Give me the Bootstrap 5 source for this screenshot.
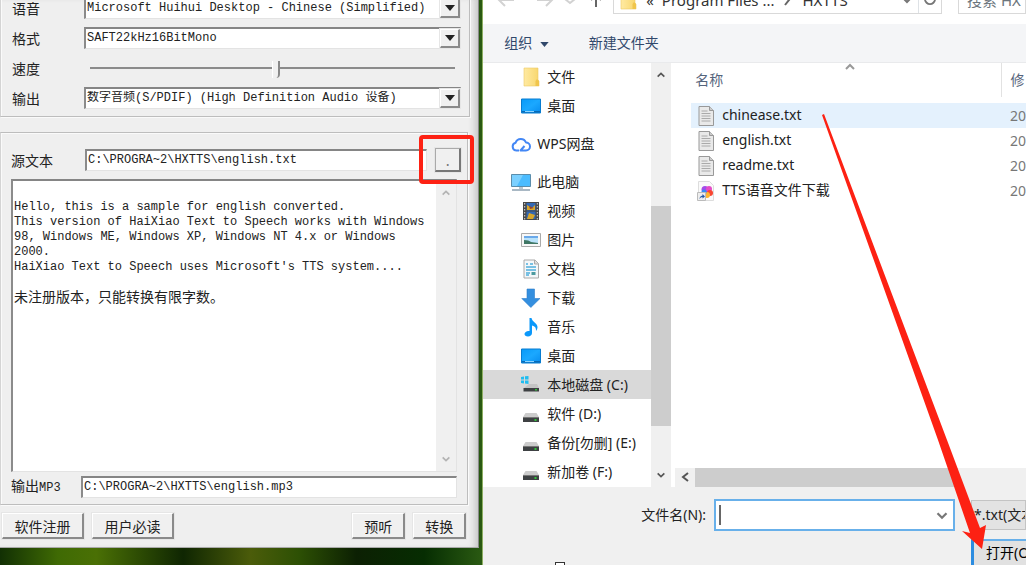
<!DOCTYPE html>
<html lang="zh-CN">
<head>
<meta charset="utf-8">
<meta name="viewport" content="width=device-width, initial-scale=1">
<title>HXTTS</title>
<link href="https://cdn.jsdelivr.net/npm/bootstrap@5.3.0/dist/css/bootstrap.min.css" rel="stylesheet">
<style>
  body { font: 14px/20px "Noto Sans", "Noto Sans CJK SC", sans-serif; color: #222; background: #173704; overflow: hidden; }
  .desktop { display: grid; grid-template-columns: 47fr 53fr; height: 100vh; min-height: 480px; }
  .wallpaper { padding: 0 3px 17px 0; background: linear-gradient(90deg, #123004, #3f6a04 12%, #4a7005 20%, #0f2602 38%, #4b5c0a 52%, #2d5004 62%, #0c2003 74%, #062d02 88%, #2a5a12); }

  /* converter window */
  .tts { background: #efefef; border-right: 1px solid #8a8a8a; border-bottom: 1px solid #aaa; font-family: "Liberation Mono", "Noto Sans CJK SC", monospace; box-shadow: inset -7px 0 7px -4px #c4c4c4; }
  .group { border: 1px solid #bdbdbd; border-left-color: #d4d4d4; box-shadow: inset 1px 1px #fafafa, 1px 1px #fafafa; margin-right: 8px; padding: 0 8px 3px 11px; }
  .group-voice { margin-top: -7px; border-top: 0; }
  .group-text { margin-top: 15px; margin-right: 10px; padding: 16px 10px 6px 10px; }
  .line { display: flex; align-items: center; height: 30px; }
  .line-short { height: 22px; }
  .cap { flex: 0 0 72px; font: 14px/20px "Noto Sans CJK SC", sans-serif; }
  .group-text .cap { flex-basis: 74px; }
  .group-text .cap-mp3 { flex-basis: 70px; font: 12px/20px "Liberation Mono", "Noto Sans CJK SC", monospace; }
  .cap-mp3 span { font-size: 14px; }
  .sunken { background: #fff; border: 1px solid #e3e3e3; border-top: 2px solid #858585; border-left: 2px solid #8b8b8b; }
  .sunken select, .sunken input, .sunken textarea { border: 0; outline: 0; padding: 0 1px; background: transparent; appearance: none; color: #222; font: 12px/15px "Liberation Mono", "Noto Sans CJK SC", monospace; min-width: 0; }
  .combo { height: 22px; }
  .raised { background: #f0f0f0; border: 1px solid #fff; border-right: 2px solid #8a8a8a; border-bottom: 2px solid #8a8a8a; box-shadow: 0 0 0 1px #e6e6e6; }
  .drop { width: 20px; }
  .speed { appearance: none; background: transparent; margin: 0 6px; height: 20px; }
  .speed::-webkit-slider-runnable-track { height: 2px; background: #8b8b8b; }
  .speed::-webkit-slider-thumb { appearance: none; width: 8px; height: 17px; margin-top: -6px; background: #f0f0f0; border-right: 2px solid #888; border-left: 1px solid #fff; border-radius: 0 0 4px 0; }
  .editor textarea { resize: none; height: 108px; white-space: pre; overflow: hidden; display: block; }
  .editor .sunken-text, .editor textarea { padding-top: 4px; }
  .editor .notice { font-size: 14px; line-height: 15px; padding: 0 1px; font-family: "Noto Sans CJK SC", sans-serif; }
  .rail { background: #f0f0f0; width: 20px; flex: none; }
  .browse { width: 26px; height: 24px; margin-right: -4px; }
  .browse .raised { width: 100%; height: 100%; padding: 0; border-color: #aaa #777 #777 #aaa; color: #777; }
  .marker { position: absolute; inset: -13px -13px -12px -16px; border: 4px solid #fd2113; border-radius: 4px; pointer-events: none; }
  .push { height: 26px; font: 14px/20px "Noto Sans CJK SC", sans-serif; color: #222; padding: 0; }
  .push-wide { width: 82px; }
  .push-slim { width: 53px; }
  .actions { padding: 8px 12px 8px 2px; gap: 8px; }

  /* open dialog */
  .dialog-open { background: #f0f0f0; min-width: 0; border-left: 1px solid #8dae62; }
  .topbar { height: 38px; margin-top: -14px; padding-bottom: 10px; font-size: 15px; color: #333; padding-left: 14px; }
  .field { border: 1px solid #d9d9d9; height: 28px; }
  .find { width: 68px; }
  .tools { background: #f4f5f7; height: 39px; border-bottom: 1px solid #e9eaec; padding-left: 21px; }
  .tools button { color: #30486b; border: 0; background: none; padding: 0; }
  .tree { width: 168px; }
  .tree a { display: flex; align-items: center; height: 29px; gap: 6px; padding-left: 38px; color: #222; text-decoration: none; white-space: nowrap; }
  .tree a:first-child { margin-top: -1px; }
  .tree a.top-level { padding-left: 28px; margin-top: 9px; }
  .tree a.current { background: #d9d9d9; }
  .tree svg { flex: none; width: 20px; height: 20px; }
  .thumb { background: #cdcdcd; }
  .sorted { left: 48%; }
  .files { table-layout: fixed; width: 100%; }
  .files th { height: 34px; font-weight: 400; color: #56657c; padding: 0 4px; }
  .files td { height: 25px; padding: 0 0 0 6px; }
  .files .when { width: 24px; padding: 0 0 0 8px; white-space: nowrap; overflow: hidden; color: #777; }
  .files th.when { border-left: 1px solid #e2e2e2; color: #56657c; }
  .files .picked td { background: #e4f1fd; }
  .files svg { width: 18px; height: 20px; margin-right: 7px; }
  .spacer-row td { height: 6px; }
  .name-box { border: 2px solid #68b0ea; background: #fff; height: 32px; width: 241px; }
  .name-box input { border: 0; outline: 0; min-width: 0; background: transparent; padding: 0; }
  .caret { width: 2px; height: 20px; background: #666; margin-left: 3px; }
  .kind { background: #e3e3e3; border: 1px solid #c4c4c4; height: 30px; appearance: none; padding: 0 0 0 2px; min-width: 0; width: 55px; color: #222; }
  .go { background: #e1e1e1; border: 2px solid #68b0ea; border-left: 3px solid #2c8ce0; border-right: 0; height: 36px; width: 55px; padding: 0 0 8px 12px; text-align: left; white-space: nowrap; overflow: hidden; }
  .pointer { position: absolute; left: 339px; top: 113px; pointer-events: none; }
  .tick { position: absolute; left: 72px; bottom: -4px; width: 10px; height: 7px; border: 1px solid #333; background: #fff; }
</style>
</head>
<body>
<svg width="0" height="0" class="position-absolute" aria-hidden="true">
  <defs>
    <linearGradient id="sky" x2="1" y2="1"><stop stop-color="#079af8"/><stop offset=".5" stop-color="#1ba8ff"/><stop offset="1" stop-color="#078df0"/></linearGradient>
    <linearGradient id="gold" x2="1"><stop stop-color="#ffeaa2"/><stop offset="1" stop-color="#f8d66c"/></linearGradient>
    <symbol id="folder" viewBox="0 0 20 20"><path d="M3 1h14v12l1 1v5H3z" fill="url(#gold)" stroke="#eccb66" stroke-width=".6"/><path d="M14.500 19v-5l1.500-2 2 2v5z" fill="#f0c54c"/></symbol>
    <symbol id="desk" viewBox="0 0 20 20"><path d="M.5 3h19v14H.5z" fill="url(#sky)" stroke="#087cd0"/><path d="M1 15h18v1.500H1z" fill="#0869b4"/><path d="M4 15.500h9" stroke="#8bd4ff"/></symbol>
    <symbol id="cloud" viewBox="0 0 20 20"><path d="M5 16.500a4 4 0 0 1-.4-7.800A5.500 5.500 0 0 1 15 8.500a4 4 0 0 1 0 8H9.500l4-4.500M5 16.500h3" fill="none" stroke="#4387f5" stroke-width="2" stroke-linejoin="round"/></symbol>
    <symbol id="pc" viewBox="0 0 20 20"><path d="M.5 2.500h19v12H.5z" fill="#4bbcff" stroke="#5b8dab"/><path d="M1 3h11L6 14H1z" fill="#7bd0ff"/><path d="M8 15h4v2H8z" fill="#b9c7d0"/><path d="M1 18h18" stroke="#8ca1b0" stroke-width="1.500"/></symbol>
    <symbol id="film" viewBox="0 0 20 20"><path d="M2 1h16v18H2z" fill="#474747"/><path d="M5.500 2h9v7.500h-9zM5.500 10.500h9V18h-9z" fill="#3368b4"/><path d="M6 4l5 3 3-3v5H6zM8 12l6 2-2 4H6z" fill="#d9a72a"/><path d="M8 5l5 2-4 1z" fill="#963f2c"/><path d="M3.700 2v17M16.300 2v17" stroke="#ddd" stroke-dasharray="1.500 1.500"/></symbol>
    <symbol id="pic" viewBox="0 0 20 20"><path d="M.5 3.500h19v13H.5z" fill="#f8f8f8" stroke="#aaa"/><path d="M3 6h14v8H3z" fill="#b9e2fa"/><path d="M3 6h14v2H3z" fill="#6aa9ea"/><path d="M3 10q5 0 7 2l7 1v1H3z" fill="#407765"/></symbol>
    <symbol id="doc" viewBox="0 0 20 20"><path d="M3 1h11l3.500 3.500V19H3z" fill="#f4f7f9" stroke="#aaa"/><path d="M13.500 1v4h4" fill="#ddd" stroke="#aaa"/><path d="M5 5h2M9 5h3M5 8h10M5 11h10M5 14h4M5 16h3" stroke="#4faedc" stroke-width="1.500"/><path d="M10.500 13h4v3h-4z" fill="#4d9a9f"/></symbol>
    <symbol id="down" viewBox="0 0 20 20"><path d="M6 1h7.500v9.500H19L9.800 19.500.8 10.500H6z" fill="#348fdf" stroke="#2b7ecb" stroke-width=".6"/></symbol>
    <symbol id="note" viewBox="0 0 20 20"><path d="M8.500 1h2c.5 4 6 5 6 9 0 2-.8 3-1.500 4 .3-3-1-5-4-5.500V16c0 2-1.800 3.500-4 3.500S3.500 18.300 3.500 17c0-2 2.500-3.500 5-3z" fill="#0b98fa"/></symbol>
    <symbol id="drive" viewBox="0 0 20 20"><path d="M4.500 9h11l2.500 4H2z" fill="#ccc"/><path d="M2 13h16v5H2z" fill="#3e4143"/><path d="M2 13h16v1H2z" fill="#777"/><path d="M13.500 15h2v2h-2z" fill="#31c43b"/></symbol>
    <symbol id="windrive" viewBox="0 0 20 20"><path d="M0 2l3-.5v3H0zM4 1.300L7.500 1v3.500H4zM0 5.500h3v3L0 8zM4 5.500h3.500V9L4 8.500z" fill="#21bdf0"/><path d="M8 9h8l2 4H3z" fill="#c4c4c4"/><path d="M2.500 13H18v3.500H2.500z" fill="#3e4143"/><path d="M14 14h2v1.500h-2z" fill="#31c43b"/></symbol>
    <symbol id="txt" viewBox="0 0 18 20"><path d="M2 .5h10.500L16.500 4.500v15H2z" fill="#e9e9e9" stroke="#999"/><path d="M12.500.5v4h4" fill="#ccc" stroke="#999"/><path d="M4.500 5h6M4.500 7.500h9M4.500 10h9M4.500 12.500h9M4.500 15h9" stroke="#aaa"/></symbol>
    <symbol id="web" viewBox="0 0 18 20"><path d="M1.500.5h11l4 4v15h-15z" fill="#fafafa" stroke="#ddd"/><circle cx="8" cy="8.500" r="3.500" fill="#a44bea"/><circle cx="12" cy="8" r="3" fill="#e44cc6"/><circle cx="13" cy="12" r="3" fill="#f84632"/><circle cx="10" cy="14" r="3" fill="#ffb52d"/><circle cx="7" cy="11" r="2.500" fill="#348bf5"/><path d="M.5 11.500h8v8h-8z" fill="#eee" stroke="#bbb"/><path d="M2.500 18q0-3 3-3.500v-1.500l2.500 2.500-2.500 2v-1.500q-2 0-3 2z" fill="#265aa5"/></symbol>
    <symbol id="chev-up" viewBox="0 0 12 8"><path d="M2 6l4-4 4 4" fill="none" stroke="currentColor" stroke-width="2"/></symbol>
    <symbol id="chev-down" viewBox="0 0 12 8"><path d="M2 2l4 4 4-4" fill="none" stroke="currentColor" stroke-width="2"/></symbol>
    <symbol id="tri" viewBox="0 0 10 6"><path d="M0 0h10L5 6z" fill="currentColor"/></symbol>
  </defs>
</svg>

<main class="desktop">
  <div class="wallpaper d-flex">
    <section class="tts d-flex flex-column flex-fill">
      <div class="group group-voice">
        <div class="line"><label class="cap" for="voice">语音</label>
          <div class="sunken combo d-flex flex-fill"><select id="voice" class="flex-fill"><option>Microsoft Huihui Desktop - Chinese (Simplified)</option></select><span class="raised drop d-flex align-items-center justify-content-center"><svg width="10" height="6"><use href="#tri"/></svg></span></div></div>
        <div class="line"><label class="cap" for="format">格式</label>
          <div class="sunken combo d-flex flex-fill"><select id="format" class="flex-fill"><option>SAFT22kHz16BitMono</option></select><span class="raised drop d-flex align-items-center justify-content-center"><svg width="10" height="6"><use href="#tri"/></svg></span></div></div>
        <div class="line"><label class="cap" for="speed">速度</label><input id="speed" class="speed flex-fill" type="range" min="0" max="100" value="51"></div>
        <div class="line"><label class="cap" for="device">输出</label>
          <div class="sunken combo d-flex flex-fill"><select id="device" class="flex-fill"><option>数字音频(S/PDIF) (High Definition Audio 设备)</option></select><span class="raised drop d-flex align-items-center justify-content-center"><svg width="10" height="6"><use href="#tri"/></svg></span></div></div>
      </div>

      <div class="group group-text d-flex flex-column flex-fill">
        <div class="line line-short"><label class="cap" for="source">源文本</label>
          <div class="sunken combo d-flex flex-fill"><input id="source" class="flex-fill" type="text" value="C:\PROGRA~2\HXTTS\english.txt"></div>
          <div class="browse position-relative ms-2"><button class="raised push" type="button" aria-label="浏览">.</button><span class="marker"></span></div>
        </div>
        <div class="sunken editor d-flex flex-fill mt-2">
          <div class="flex-fill">
            <textarea class="w-100" aria-label="文本内容">

Hello, this is a sample for english converted.
This version of HaiXiao Text to Speech works with Windows
98, Windows ME, Windows XP, Windows NT 4.x or Windows
2000.
HaiXiao Text to Speech uses Microsoft's TTS system....</textarea>
            <div class="notice">未注册版本，只能转换有限字数。</div>
          </div>
          <div class="rail d-flex flex-column justify-content-between align-items-center py-2 text-black-50"><svg width="10" height="8" opacity=".5"><use href="#chev-up"/></svg><svg width="10" height="8" opacity=".5"><use href="#chev-down"/></svg></div>
        </div>
        <div class="line line-short mt-1"><label class="cap cap-mp3" for="mp3"><span>输出</span>MP3</label>
          <div class="sunken combo d-flex flex-fill"><input id="mp3" class="flex-fill" type="text" value="C:\PROGRA~2\HXTTS\english.mp3"></div></div>
      </div>

      <div class="actions d-flex">
        <button class="raised push push-wide" type="button">软件注册</button>
        <button class="raised push push-wide me-auto" type="button">用户必读</button>
        <button class="raised push push-slim" type="button">预听</button>
        <button class="raised push push-slim" type="button">转换</button>
      </div>
    </section>
  </div>

  <section class="dialog-open d-flex flex-column position-relative">
    <header class="topbar bg-white d-flex align-items-center">
      <svg width="116" height="28" fill="none" stroke="#d2d2d2" stroke-width="2"><path d="M2 14h15M8 8l-6 6 6 6M40 14h15M49 8l6 6-6 6M68 13l5 4 5-4"/><path d="M99 21V8M94 14l5-6 5 6" stroke="#666"/></svg>
      <div class="field d-flex align-items-center flex-fill">
        <svg class="ms-1" width="20" height="20"><use href="#folder"/></svg>
        <span class="ms-2">«</span><span class="ms-2">Program Files ...</span>
        <svg class="mx-2" width="8" height="12" fill="none" stroke="#666" stroke-width="2"><path d="M2 1l4 5-4 5"/></svg><span class="ms-1">HXTTS</span>
        <svg class="ms-auto me-1" width="14" height="8" color="#777"><use href="#chev-down"/></svg>
        <span class="border-start h-100 px-1 d-flex align-items-center"><svg width="14" height="16" fill="none" stroke="#777" stroke-width="2"><path d="M3 4a5 5 0 1 0 8 0M11 1v4H7"/></svg></span>
      </div>
      <div class="field find ms-3 ps-2 flex-shrink-0 text-nowrap text-secondary d-flex align-items-center">搜索 HX</div>
    </header>
    <div class="tools d-flex align-items-center">
      <button type="button">组织 <svg class="ms-1" width="9" height="5"><use href="#tri"/></svg></button>
      <button type="button" class="ms-4 ps-3">新建文件夹</button>
    </div>

    <div class="d-flex flex-fill bg-white overflow-hidden">
      <nav class="tree overflow-hidden flex-shrink-0">
        <a href="#"><svg><use href="#folder"/></svg>文件</a>
        <a href="#"><svg><use href="#desk"/></svg>桌面</a>
        <a href="#" class="top-level"><svg><use href="#cloud"/></svg>WPS网盘</a>
        <a href="#" class="top-level"><svg><use href="#pc"/></svg>此电脑</a>
        <a href="#"><svg><use href="#film"/></svg>视频</a>
        <a href="#"><svg><use href="#pic"/></svg>图片</a>
        <a href="#"><svg><use href="#doc"/></svg>文档</a>
        <a href="#"><svg><use href="#down"/></svg>下载</a>
        <a href="#"><svg><use href="#note"/></svg>音乐</a>
        <a href="#"><svg><use href="#desk"/></svg>桌面</a>
        <a href="#" class="current"><svg><use href="#windrive"/></svg>本地磁盘 (C:)</a>
        <a href="#"><svg><use href="#drive"/></svg>软件 (D:)</a>
        <a href="#"><svg><use href="#drive"/></svg>备份[勿删] (E:)</a>
        <a href="#"><svg><use href="#drive"/></svg>新加卷 (F:)</a>
      </nav>
      <div class="rail d-flex flex-column align-items-center">
        <svg class="my-2" width="10" height="8" color="#555"><use href="#chev-up"/></svg>
        <div class="w-100" style="height:28%"></div>
        <div class="thumb w-100" style="height:52%"></div>
        <svg class="mt-auto mb-2" width="10" height="8" color="#555"><use href="#chev-down"/></svg>
      </div>
      <div class="flex-fill d-flex flex-column overflow-hidden ms-1 position-relative">
        <svg class="sorted position-absolute top-0" width="12" height="8" color="#999"><use href="#chev-up"/></svg>
        <div class="flex-fill ps-3">
          <table class="files">
            <thead><tr><th>名称</th><th class="when">修</th></tr></thead>
            <tbody>
              <tr class="spacer-row"><td colspan="2"></td></tr>
              <tr class="picked"><td><svg><use href="#txt"/></svg>chinease.txt</td><td class="when">20</td></tr>
              <tr><td><svg><use href="#txt"/></svg>english.txt</td><td class="when">20</td></tr>
              <tr><td><svg><use href="#txt"/></svg>readme.txt</td><td class="when">20</td></tr>
              <tr><td><svg><use href="#web"/></svg>TTS语音文件下载</td><td class="when">20</td></tr>
            </tbody>
          </table>
        </div>
        <div class="d-flex" style="height:19px;background:#f0f0f0">
          <svg class="m-1" width="12" height="12" fill="none" stroke="#555" stroke-width="2"><path d="M9 1L4 5l5 4"/></svg>
          <div class="thumb" style="width:75%"></div>
        </div>
      </div>
    </div>

    <footer class="position-relative overflow-hidden" style="height:78px">
      <div class="d-flex align-items-center justify-content-end pt-2 mt-1">
        <label for="fname" class="me-2">文件名(N):</label>
        <div class="name-box d-flex align-items-center"><span class="caret"></span><input id="fname" type="text" class="flex-fill"><svg class="me-1" width="14" height="9" color="#777"><use href="#chev-down"/></svg></div>
        <select class="kind ms-3" aria-label="文件类型"><option>*.txt(文本</option></select>
      </div>
      <div class="d-flex justify-content-end mt-2"><button type="button" class="go">打开(O)</button></div>
      <span class="tick"></span>
    </footer>

    <svg class="pointer" width="166" height="438" aria-hidden="true"><path d="M0 2l2-1L125 327l33 88 6-3-4 24-20-18 8 2-32-93z" fill="#fd2113"/></svg>
  </section>
</main>
<script src="https://cdn.jsdelivr.net/npm/bootstrap@5.3.0/dist/js/bootstrap.bundle.min.js"></script>
</body>
</html>
